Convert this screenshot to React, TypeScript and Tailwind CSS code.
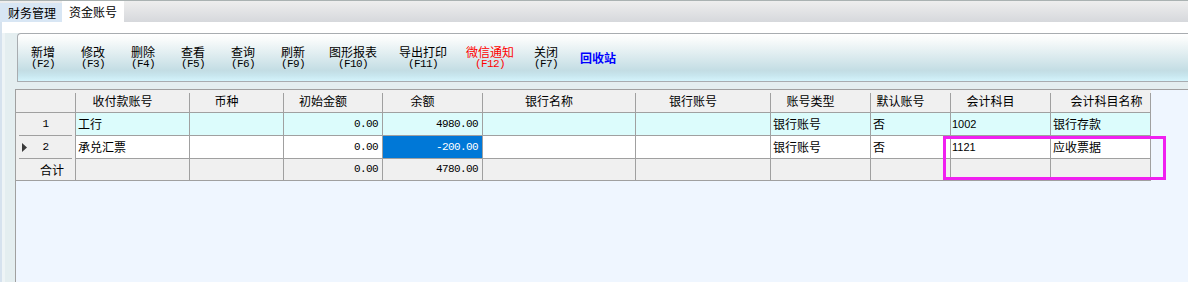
import React from "react";

type Kind = "text" | "num" | "code";

const cols: { w: string; label: string; kind: Kind; hpr: string }[] = [
  { w: "w-[114px]", label: "收付款账号", kind: "text", hpr: "pr-[20px]" },
  { w: "w-[94px]", label: "币种", kind: "text", hpr: "pr-[20px]" },
  { w: "w-[99px]", label: "初始金额", kind: "num", hpr: "pr-[20px]" },
  { w: "w-[100px]", label: "余额", kind: "num", hpr: "pr-[20px]" },
  { w: "w-[153px]", label: "银行名称", kind: "text", hpr: "pr-[20px]" },
  { w: "w-[135px]", label: "银行账号", kind: "text", hpr: "pr-[20px]" },
  { w: "w-[100px]", label: "账号类型", kind: "text", hpr: "pr-[20px]" },
  { w: "w-[80px]", label: "默认账号", kind: "text", hpr: "pr-[20px]" },
  { w: "w-[100px]", label: "会计科目", kind: "code", hpr: "pr-[20px]" },
  { w: "w-[100px]", label: "会计科目名称", kind: "text", hpr: "pl-[12px]" },
];

const rows: {
  head: string;
  cells: string[];
  bg: string;
  mark?: boolean;
  sel?: number;
  total?: boolean;
}[] = [
  {
    head: "1",
    cells: ["工行", "", "0.00", "4980.00", "", "", "银行账号", "否", "1002", "银行存款"],
    bg: "bg-[#dcfcfc]",
  },
  {
    head: "2",
    cells: ["承兑汇票", "", "0.00", "-200.00", "", "", "银行账号", "否", "1121", "应收票据"],
    bg: "bg-white",
    mark: true,
    sel: 3,
  },
  {
    head: "合计",
    cells: ["", "", "0.00", "4780.00", "", "", "", "", "", ""],
    bg: "bg-[#f0f0f0]",
    total: true,
  },
];

const buttons: { w: string; label: string; key?: string; color?: string; bold?: boolean }[] = [
  { w: "w-[50px]", label: "新增", key: "(F2)" },
  { w: "w-[50px]", label: "修改", key: "(F3)" },
  { w: "w-[50px]", label: "删除", key: "(F4)" },
  { w: "w-[50px]", label: "查看", key: "(F5)" },
  { w: "w-[50px]", label: "查询", key: "(F6)" },
  { w: "w-[50px]", label: "刷新", key: "(F9)" },
  { w: "w-[70px]", label: "图形报表", key: "(F10)" },
  { w: "w-[70px]", label: "导出打印", key: "(F11)" },
  { w: "w-[64px]", label: "微信通知", key: "(F12)", color: "text-[#ff0000]" },
  { w: "w-[48px]", label: "关闭", key: "(F7)" },
  { w: "w-[56px]", label: "回收站", color: "text-[#0000ff]", bold: true },
];

const cjk = "font-['Noto_Sans_CJK_SC','Liberation_Sans',sans-serif]";
const mono = "font-['Liberation_Mono',monospace] text-[11px] tracking-[-0.6px]";

function Cell({
  kind,
  value,
  w,
  bg,
  selected,
}: {
  kind: Kind;
  value: string;
  w: string;
  bg: string;
  selected?: boolean;
}) {
  const base = `${w} h-full shrink-0 border-r border-[#a0a0a0] flex items-center overflow-hidden whitespace-nowrap`;
  const color = selected ? "bg-[#0078d7] text-white" : `${bg} text-black`;
  if (kind === "num") {
    return <div className={`${base} ${color} justify-end pr-[4px] ${mono}`}>{value}</div>;
  }
  if (kind === "code") {
    return (
      <div className={`${base} ${color} pl-[1px] font-['Liberation_Sans',sans-serif] text-[11px]`}>
        {value}
      </div>
    );
  }
  return <div className={`${base} ${color} pl-[2px] ${cjk} text-[12px] leading-[14px]`}>{value}</div>;
}

export default function App() {
  return (
    <div className={`w-[1188px] h-[282px] overflow-hidden flex flex-col bg-[#e4eef0] ${cjk} text-black`}>
      {/* tab bar */}
      <div className="h-[22px] shrink-0 flex items-end border-t border-[#aab2b2] bg-[linear-gradient(to_bottom,#eeeeee,#d6d8dc)]">
        <div className="w-[62px] h-[19px] bg-[#d8e6f4] flex items-center pl-[8px] text-[12px] leading-[14px]">
          财务管理
        </div>
        <div className="w-[62px] h-[21px] bg-white flex items-center pl-[7px] text-[12px] leading-[14px]">
          资金账号
        </div>
      </div>

      {/* body */}
      <div className="flex-1 flex min-h-0">
        <div className="w-[2px] shrink-0 bg-[#d6e2ee]" />
        <div className="flex-1 flex flex-col min-w-0">
          <div className="h-[11px] shrink-0 bg-white" />
          <div className="flex-1 flex min-h-0">
            <div className="w-[3px] shrink-0 bg-[#eef4f6]" />
            <div className="flex-1 flex flex-col min-w-0">
              {/* toolbar */}
              <div className="h-[49px] shrink-0 ml-[12px] flex items-center border-t border-b border-l border-[#a8acb0] rounded-tl-[4px] bg-[linear-gradient(to_bottom,#ffffff_0%,#f7fafa_14%,#c3dde4_78%,#c8e6ee_88%,#d4f4fc_100%)]">
                {buttons.map((b) => (
                  <div
                    key={b.label}
                    className={`${b.w} shrink-0 flex flex-col items-center justify-center ${b.color ?? "text-black"}`}
                  >
                    <div className={`text-[12px] leading-[13px] whitespace-nowrap ${b.bold ? "font-bold" : ""}`}>
                      {b.label}
                    </div>
                    {b.key && <div className={`${mono} leading-[11px] mt-[1px] whitespace-nowrap`}>{b.key}</div>}
                  </div>
                ))}
              </div>
              <div className="h-[7px] shrink-0" />
              {/* grid */}
              <div className="flex-1 ml-[10px] border-l border-t border-[#a0a0a0] bg-[#eff6ff] relative">
                {/* header */}
                <div className="flex h-[23px] w-[1135px] border-b border-[#a0a0a0] bg-[#f0f0f0]">
                  <div className="w-[60px] shrink-0 flex">
                    <div className="flex-1" />
                    <div className="w-px bg-[#a0a0a0] mt-[3px]" />
                  </div>
                  {cols.map((c) => (
                    <div key={c.label} className={`${c.w} shrink-0 flex`}>
                      <div
                        className={`flex-1 flex items-center justify-center ${c.hpr} text-[12px] leading-[14px] whitespace-nowrap`}
                      >
                        {c.label}
                      </div>
                      <div className="w-px bg-[#a0a0a0] mt-[3px]" />
                    </div>
                  ))}
                </div>
                {/* rows */}
                {rows.map((r) => (
                  <div key={r.head} className={`flex ${r.total ? "h-[22px]" : "h-[23px]"} w-[1135px]`}>
                    <div
                      className={`w-[60px] shrink-0 border-r border-[#a0a0a0] bg-[#f0f0f0] flex flex-col ${
                        r.total ? "border-b" : ""
                      }`}
                    >
                      <div className="flex-1 flex items-center relative">
                        {r.mark && (
                          <svg
                            className="absolute left-[6px] top-[7px]"
                            width="5"
                            height="9"
                            viewBox="0 0 5 9"
                          >
                            <polygon points="0,0 5,4.5 0,9" fill="#3a3a3a" />
                          </svg>
                        )}
                        {r.total ? (
                          <span className="pl-[24px] text-[12px] leading-[14px]">{r.head}</span>
                        ) : (
                          <span className={`w-full text-center ${mono} leading-[12px]`}>{r.head}</span>
                        )}
                      </div>
                      {!r.total && <div className="h-px mx-[3px] bg-[#a0a0a0]" />}
                    </div>
                    <div className="flex border-b border-[#a0a0a0]">
                      {cols.map((c, i) => (
                        <Cell
                          key={c.label}
                          kind={c.kind}
                          value={r.cells[i]}
                          w={c.w}
                          bg={r.bg}
                          selected={r.sel === i}
                        />
                      ))}
                    </div>
                  </div>
                ))}
                {/* highlight annotation */}
                <div className="absolute left-[927px] top-[46px] w-[223px] h-[44px] border-[3px] border-[#f020f0]" />
              </div>
            </div>
          </div>
        </div>
      </div>
    </div>
  );
}
